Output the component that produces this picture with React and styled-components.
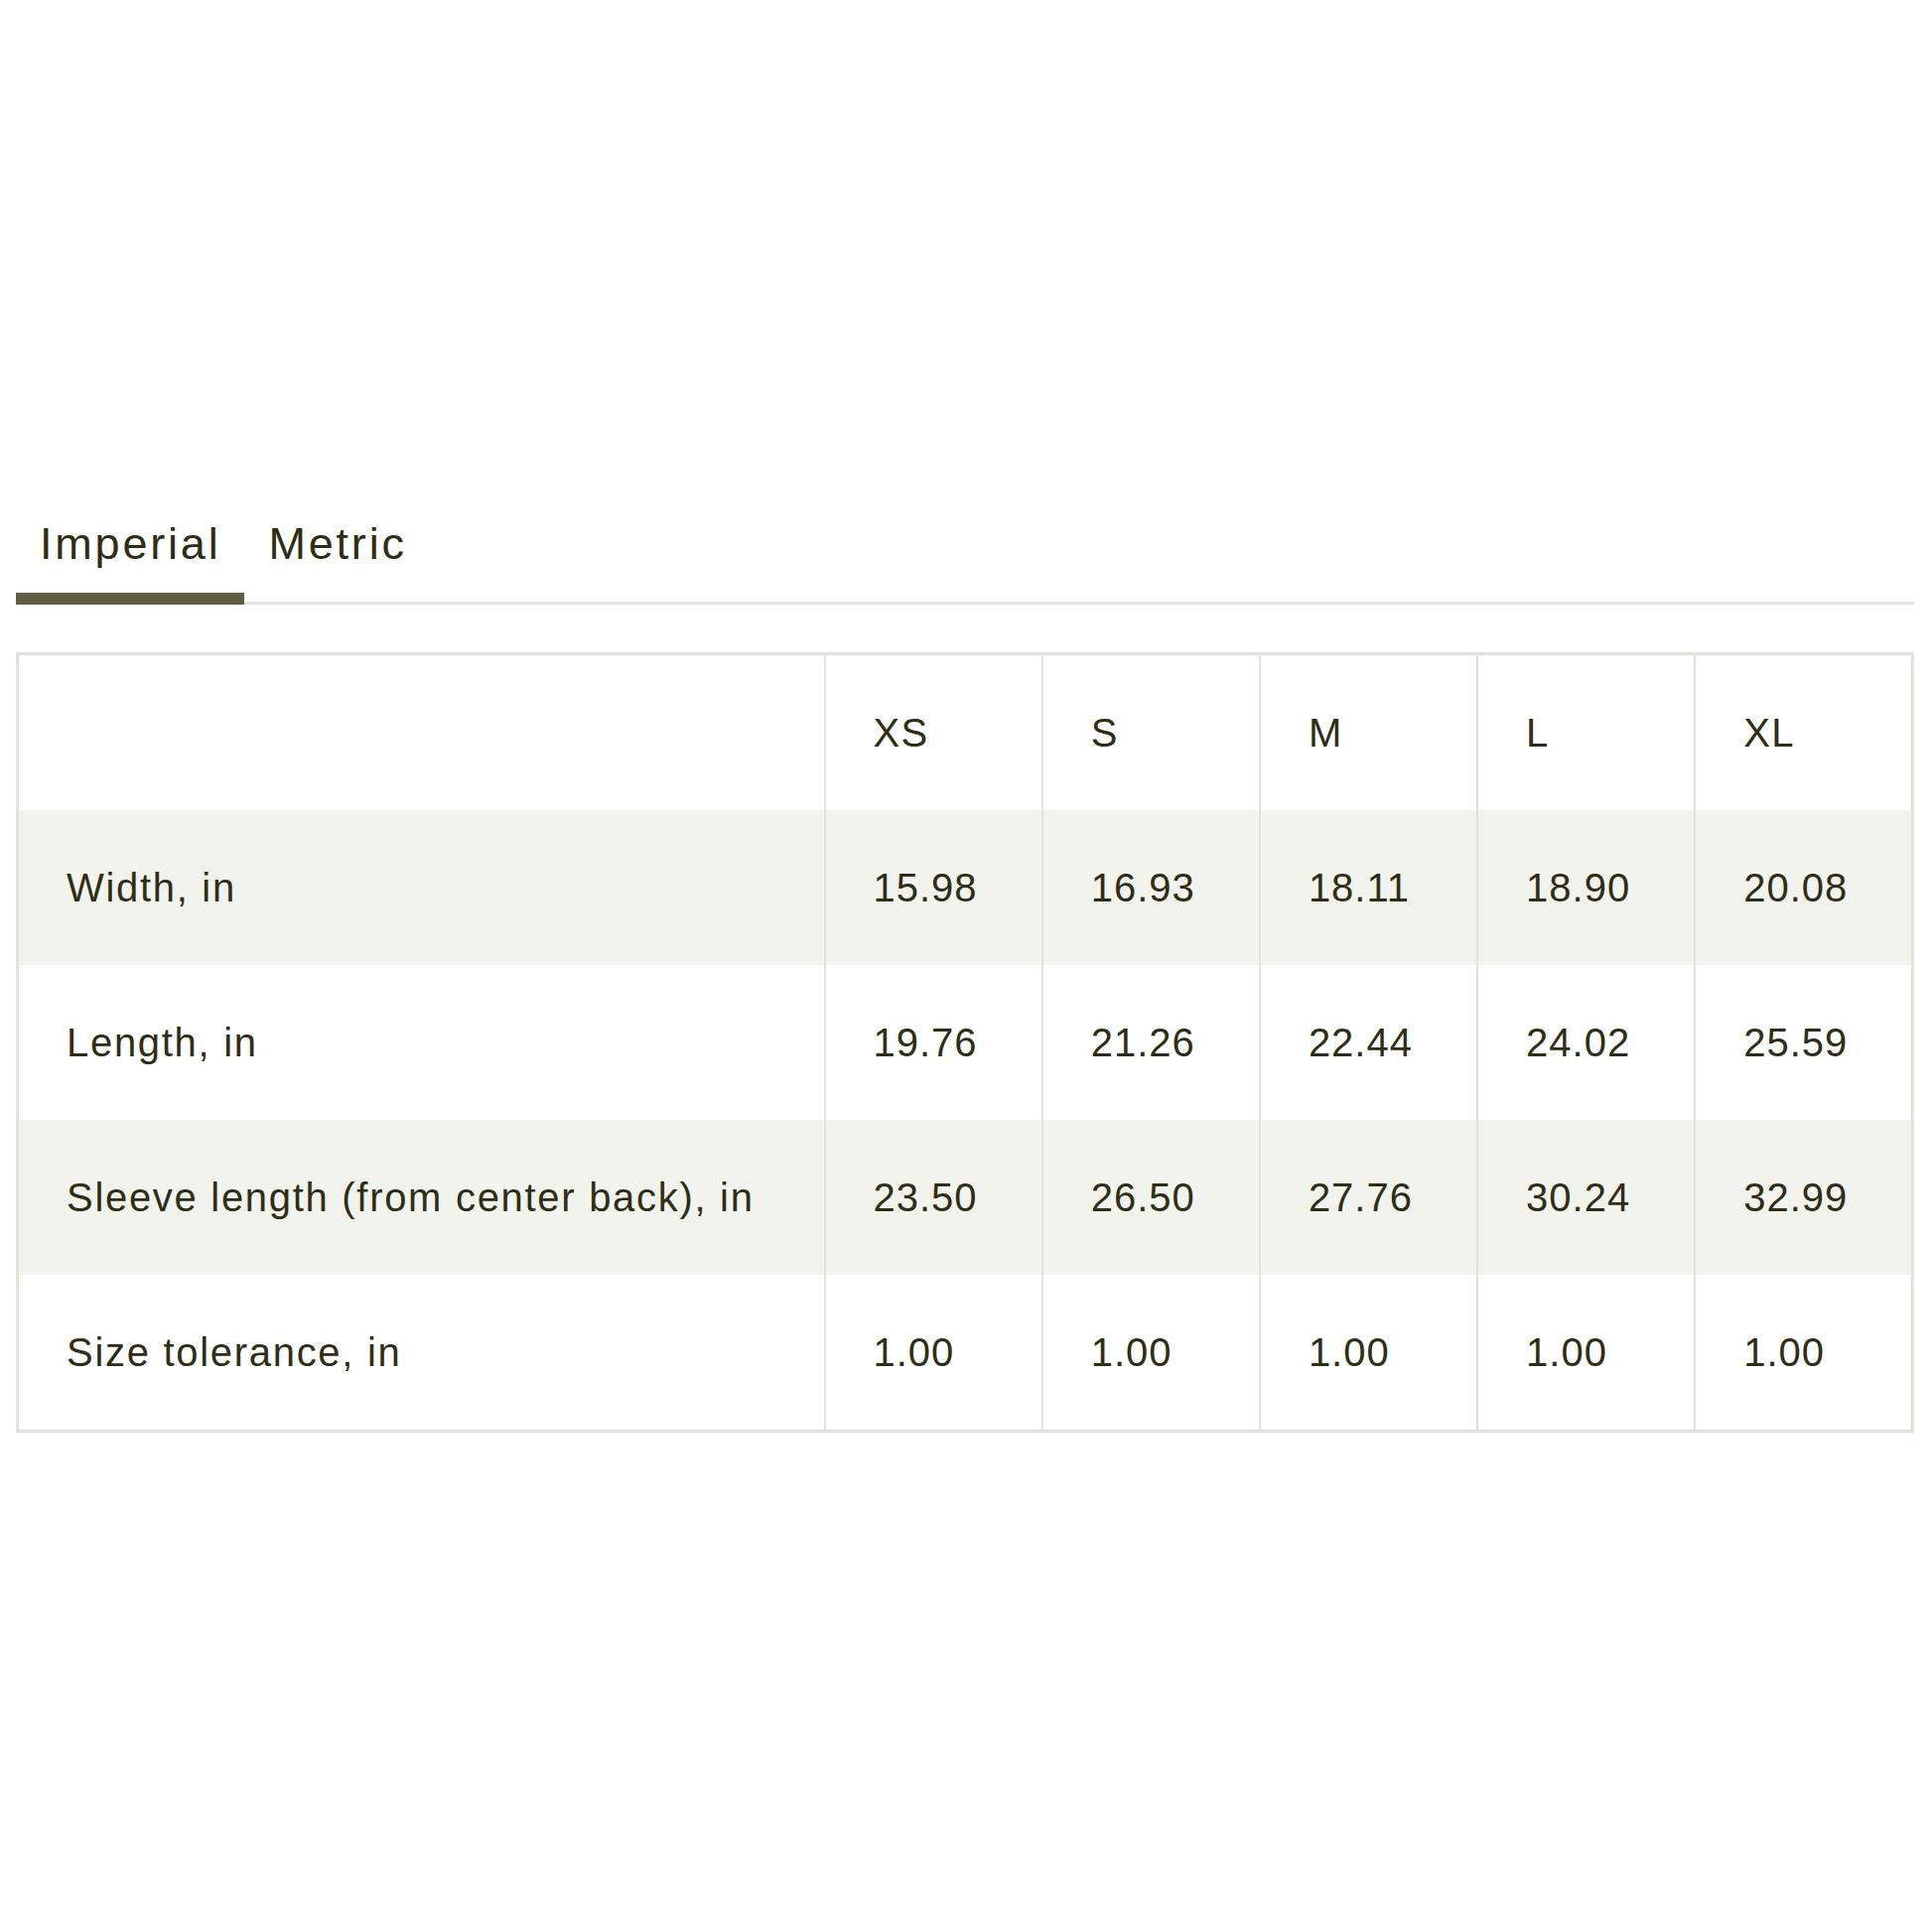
import styled, { createGlobalStyle } from 'styled-components';
import { useState } from 'react';

const GlobalStyle = createGlobalStyle`
  body {
    margin: 0;
    background: #ffffff;
    font-family: "Liberation Sans", Arial, sans-serif;
    color: #2e2e16;
  }
`;

const sizes = ['XS', 'S', 'M', 'L', 'XL'];

const charts = {
  Imperial: [
    { label: 'Width, in', values: ['15.98', '16.93', '18.11', '18.90', '20.08'] },
    { label: 'Length, in', values: ['19.76', '21.26', '22.44', '24.02', '25.59'] },
    { label: 'Sleeve length (from center back), in', values: ['23.50', '26.50', '27.76', '30.24', '32.99'] },
    { label: 'Size tolerance, in', values: ['1.00', '1.00', '1.00', '1.00', '1.00'] },
  ],
  Metric: [
    { label: 'Width, cm', values: ['40.6', '43', '46', '48', '51'] },
    { label: 'Length, cm', values: ['50.2', '54', '57', '61', '65'] },
    { label: 'Sleeve length (from center back), cm', values: ['59.7', '67.3', '70.5', '76.8', '83.8'] },
    { label: 'Size tolerance, cm', values: ['2.5', '2.5', '2.5', '2.5', '2.5'] },
  ],
};

export default function App() {
  const [unit, setUnit] = useState('Imperial');
  const rows = charts[unit];

  return (
    <>
      <GlobalStyle />
      <Page>
        <TabList>
          {Object.keys(charts).map((name) => (
            <Tab key={name} $active={unit === name} onClick={() => setUnit(name)}>
              {name}
            </Tab>
          ))}
        </TabList>

        <SizeTable>
          <colgroup>
            <col style={{ width: 813 }} />
            {sizes.map((s) => (
              <col key={s} />
            ))}
          </colgroup>
          <thead>
            <tr>
              <HeadCell />
              {sizes.map((s) => (
                <HeadCell key={s}>{s}</HeadCell>
              ))}
            </tr>
          </thead>
          <tbody>
            {rows.map((row, i) => (
              <Row key={row.label} $shaded={i % 2 === 0}>
                <Cell $label>{row.label}</Cell>
                {row.values.map((v, j) => (
                  <Cell key={j}>{v}</Cell>
                ))}
              </Row>
            ))}
          </tbody>
        </SizeTable>
      </Page>
    </>
  );
}

const Page = styled.div`
  padding: 521px 18px 0 16px;
`;

const TabList = styled.div`
  display: flex;
  border-bottom: 3px solid #e4e4dc;
`;

const Tab = styled.button`
  position: relative;
  background: none;
  border: none;
  margin: 0;
  padding: 0 24px 31px 24px;
  font-family: "Liberation Sans", Arial, sans-serif;
  font-size: 45px;
  line-height: 54px;
  letter-spacing: 2.8px;
  color: #2e2e16;
  cursor: pointer;

  &::after {
    content: '';
    display: ${(p) => (p.$active ? 'block' : 'none')};
    position: absolute;
    left: 0;
    right: 0;
    bottom: -3px;
    height: 12px;
    background: #5f5e45;
  }
`;

const SizeTable = styled.table`
  width: 100%;
  margin-top: 48px;
  border-collapse: collapse;
  border: 3px solid #e2e2da;
  table-layout: fixed;
`;

const HeadCell = styled.th`
  height: 156px;
  padding: 0 0 0 48px;
  text-align: left;
  font-weight: 400;
  font-size: 40px;
  letter-spacing: 1.4px;
  color: #2e2e16;
  border-left: 2px solid #e2e2da;
  vertical-align: middle;
`;

const Row = styled.tr`
  background: ${(p) => (p.$shaded ? '#f3f3ee' : '#ffffff')};
`;

const Cell = styled.td`
  height: 156px;
  padding: 0 0 0 48px;
  font-size: 40px;
  letter-spacing: ${(p) => (p.$label ? '1.7px' : '1px')};
  color: #2e2e16;
  border-left: 2px solid #e2e2da;
  vertical-align: middle;
  white-space: nowrap;
`;
